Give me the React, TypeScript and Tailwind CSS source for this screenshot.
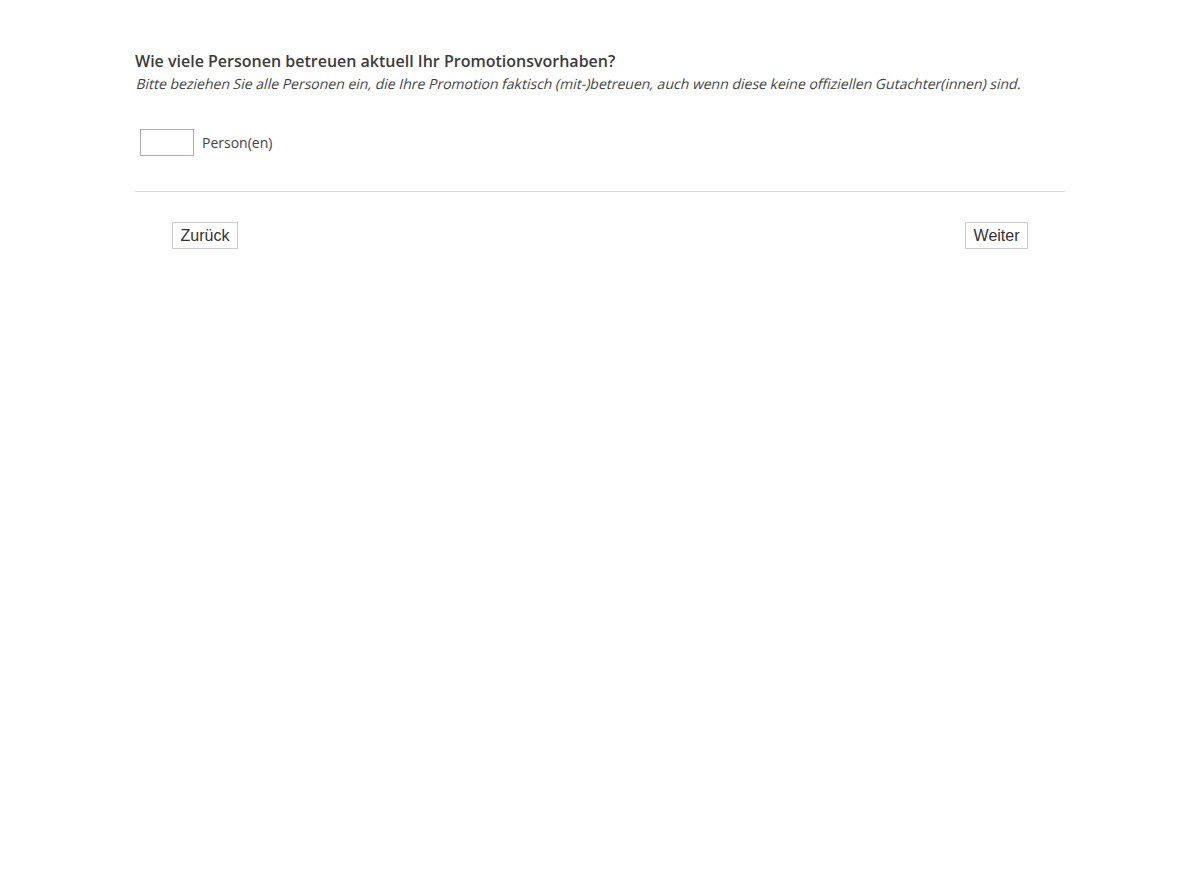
export default function App() {
  return (
    <div className="min-h-screen bg-white font-['Open_Sans',sans-serif] text-[#444]">
      <div className="mx-auto w-[930px] pt-[50px]">
        <div>
          <h1 className="text-[16px] font-semibold leading-[22px] text-[#3c3c3c]">
            Wie viele Personen betreuen aktuell Ihr Promotionsvorhaben?
          </h1>
          {/* regular face slanted, the source page used a synthesized italic */}
          <p className="mt-[1px] text-[14px] leading-[22px] text-[#444]">
            <span className="-ml-[1px] inline-block origin-bottom -skew-x-[14deg]">
              Bitte beziehen Sie alle Personen ein, die Ihre Promotion faktisch (mit-)betreuen, auch wenn diese keine offiziellen Gutachter(innen) sind.
            </span>
          </p>
        </div>

        <div className="mt-[34px] flex items-center gap-2 pl-[5px]">
          <input
            type="text"
            className="h-[27px] w-[54px] border border-[#aaa] bg-white px-1 text-[14px] outline-none"
          />
          <span className="text-[14px] text-[#444]">Person(en)</span>
        </div>

        <div className="mt-[35px] border-t border-[#ddd]" />

        <div className="flex items-center justify-between px-[37px] pt-[30px]">
          <button className="h-[27px] border border-[#ccc] bg-white px-[7.5px] font-['Liberation_Sans',Arial,sans-serif] text-[16px] text-[#333]">
            Zurück
          </button>
          <button className="h-[27px] border border-[#ccc] bg-white px-[7.5px] font-['Liberation_Sans',Arial,sans-serif] text-[16px] text-[#333]">
            Weiter
          </button>
        </div>
      </div>
    </div>
  )
}
